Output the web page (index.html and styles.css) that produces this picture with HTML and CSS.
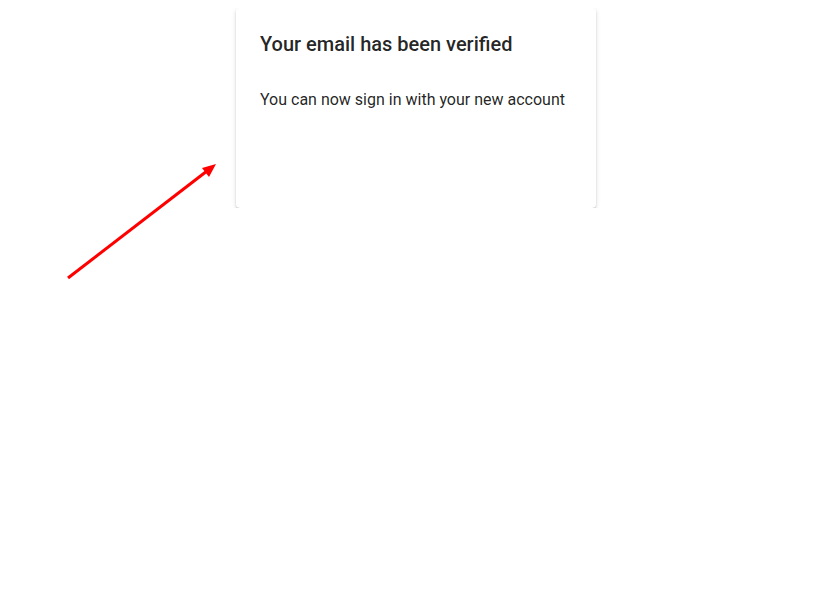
FILE: index.html
```html
<!DOCTYPE html>
<html>
<head>
<meta charset="utf-8">
<link rel="stylesheet" href="styles.css">
</head>
<body>
<div class="page">
  <div class="card">
    <h2 class="card-title">Your email has been verified</h2>
    <p class="card-text">You can now sign in with your new account</p>
  </div>
</div>
<svg class="arrow" width="816" height="590" viewBox="0 0 816 590">
  <line x1="68" y1="278" x2="207" y2="171" stroke="#ff0000" stroke-width="3"/>
  <polygon points="216,164 202,168 209,177" fill="#ff0000"/>
</svg>
</body>
</html>
```
FILE: styles.css
```css
html, body {
  margin: 0;
  padding: 0;
  background: #fff;
}
body {
  margin: 8px;
  font-family: Roboto, "Helvetica Neue", sans-serif;
  color: rgba(0, 0, 0, 0.87);
}
.page {
  display: flex;
  justify-content: center;
  padding-left: 16px;
}
.card {
  width: 360px;
  height: 200px;
  box-sizing: border-box;
  padding: 24px;
  background: #fff;
  border-radius: 4px;
  box-shadow: 0 3px 1px -2px rgba(0,0,0,.2), 0 2px 2px 0 rgba(0,0,0,.14), 0 1px 5px 0 rgba(0,0,0,.12);
}
.card-title {
  margin: 0 0 32px;
  font-size: 20px;
  font-weight: 500;
  line-height: 24px;
}
.card-text {
  margin: 0;
  font-size: 16px;
  line-height: 24px;
}
.arrow {
  position: absolute;
  left: 0;
  top: 0;
  pointer-events: none;
}
```
